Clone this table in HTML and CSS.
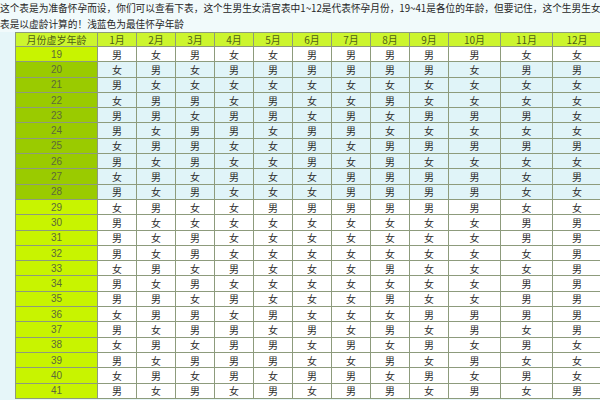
FILE: index.html
```html
<!DOCTYPE html>
<html lang="zh-CN">
<head>
<meta charset="utf-8">
<title>生男生女清宫表</title>
<link rel="stylesheet" href="styles.css">
</head>
<body>
<div class="page">
  <div class="intro">
    <p class="line">这个表是为准备怀孕而设，你们可以查看下表，这个生男生女清宫表中1~12是代表怀孕月份，19~41是各位的年龄，但要记住，这个生男生女清</p>
    <p class="line">表是以虚龄计算的！浅蓝色为最佳怀孕年龄</p>
  </div>
  <table class="chart">
    <colgroup>
      <col class="c-age"><col class="c-m"><col class="c-m"><col class="c-m"><col class="c-m"><col class="c-m"><col class="c-m"><col class="c-m"><col class="c-m"><col class="c-m"><col class="c-w"><col class="c-w"><col class="c-l">
    </colgroup>
    <thead>
      <tr class="head"><th>月份虚岁年龄</th><th>1月</th><th>2月</th><th>3月</th><th>4月</th><th>5月</th><th>6月</th><th>7月</th><th>8月</th><th>9月</th><th>10月</th><th>11月</th><th>12月</th></tr>
    </thead>
    <tbody>
      <tr class="plain"><th>19</th><td>男</td><td>女</td><td>男</td><td>女</td><td>女</td><td>男</td><td>男</td><td>男</td><td>男</td><td>男</td><td>女</td><td>女</td></tr>
      <tr class="best"><th>20</th><td>女</td><td>男</td><td>女</td><td>男</td><td>男</td><td>男</td><td>男</td><td>男</td><td>男</td><td>女</td><td>男</td><td>男</td></tr>
      <tr class="best"><th>21</th><td>男</td><td>女</td><td>女</td><td>女</td><td>女</td><td>女</td><td>女</td><td>女</td><td>女</td><td>女</td><td>女</td><td>女</td></tr>
      <tr class="best"><th>22</th><td>女</td><td>男</td><td>男</td><td>女</td><td>男</td><td>女</td><td>女</td><td>男</td><td>女</td><td>女</td><td>女</td><td>女</td></tr>
      <tr class="best"><th>23</th><td>男</td><td>男</td><td>女</td><td>男</td><td>男</td><td>女</td><td>男</td><td>女</td><td>男</td><td>男</td><td>男</td><td>女</td></tr>
      <tr class="best"><th>24</th><td>男</td><td>女</td><td>男</td><td>男</td><td>女</td><td>男</td><td>男</td><td>女</td><td>女</td><td>女</td><td>女</td><td>女</td></tr>
      <tr class="best"><th>25</th><td>女</td><td>男</td><td>男</td><td>女</td><td>女</td><td>男</td><td>女</td><td>男</td><td>男</td><td>男</td><td>男</td><td>男</td></tr>
      <tr class="best"><th>26</th><td>男</td><td>女</td><td>男</td><td>女</td><td>女</td><td>男</td><td>女</td><td>男</td><td>女</td><td>女</td><td>女</td><td>女</td></tr>
      <tr class="best"><th>27</th><td>女</td><td>男</td><td>女</td><td>男</td><td>女</td><td>女</td><td>男</td><td>男</td><td>男</td><td>男</td><td>女</td><td>男</td></tr>
      <tr class="best"><th>28</th><td>男</td><td>女</td><td>男</td><td>女</td><td>女</td><td>女</td><td>男</td><td>男</td><td>男</td><td>男</td><td>女</td><td>女</td></tr>
      <tr class="plain"><th>29</th><td>女</td><td>男</td><td>女</td><td>女</td><td>男</td><td>男</td><td>男</td><td>男</td><td>男</td><td>男</td><td>女</td><td>女</td></tr>
      <tr class="plain"><th>30</th><td>男</td><td>女</td><td>女</td><td>女</td><td>女</td><td>女</td><td>女</td><td>女</td><td>女</td><td>女</td><td>男</td><td>男</td></tr>
      <tr class="plain"><th>31</th><td>男</td><td>女</td><td>男</td><td>女</td><td>女</td><td>女</td><td>女</td><td>女</td><td>女</td><td>女</td><td>男</td><td>男</td></tr>
      <tr class="plain"><th>32</th><td>男</td><td>女</td><td>男</td><td>女</td><td>女</td><td>女</td><td>女</td><td>女</td><td>女</td><td>女</td><td>女</td><td>男</td></tr>
      <tr class="plain"><th>33</th><td>女</td><td>男</td><td>女</td><td>男</td><td>女</td><td>女</td><td>女</td><td>男</td><td>女</td><td>女</td><td>女</td><td>男</td></tr>
      <tr class="plain"><th>34</th><td>男</td><td>女</td><td>男</td><td>女</td><td>女</td><td>女</td><td>女</td><td>女</td><td>女</td><td>女</td><td>男</td><td>男</td></tr>
      <tr class="plain"><th>35</th><td>男</td><td>男</td><td>女</td><td>男</td><td>女</td><td>女</td><td>女</td><td>男</td><td>女</td><td>女</td><td>男</td><td>男</td></tr>
      <tr class="plain"><th>36</th><td>女</td><td>男</td><td>男</td><td>女</td><td>男</td><td>女</td><td>女</td><td>女</td><td>男</td><td>男</td><td>男</td><td>男</td></tr>
      <tr class="plain"><th>37</th><td>男</td><td>女</td><td>男</td><td>男</td><td>女</td><td>男</td><td>女</td><td>男</td><td>女</td><td>男</td><td>女</td><td>男</td></tr>
      <tr class="plain"><th>38</th><td>女</td><td>男</td><td>女</td><td>男</td><td>男</td><td>女</td><td>男</td><td>女</td><td>男</td><td>女</td><td>男</td><td>女</td></tr>
      <tr class="plain"><th>39</th><td>男</td><td>女</td><td>男</td><td>男</td><td>男</td><td>女</td><td>女</td><td>男</td><td>女</td><td>男</td><td>女</td><td>女</td></tr>
      <tr class="plain"><th>40</th><td>女</td><td>男</td><td>女</td><td>男</td><td>女</td><td>男</td><td>男</td><td>女</td><td>男</td><td>女</td><td>男</td><td>女</td></tr>
      <tr class="plain"><th>41</th><td>男</td><td>女</td><td>男</td><td>女</td><td>男</td><td>女</td><td>男</td><td>男</td><td>女</td><td>男</td><td>女</td><td>男</td></tr>
    </tbody>
  </table>
</div>
</body>
</html>
```

FILE: styles.css
```css
html, body {
  margin: 0;
  padding: 0;
}
body {
  width: 600px;
  height: 400px;
  overflow: hidden;
  background: #e6f6f9;
  font-family: "Noto Sans CJK SC", "Liberation Sans", sans-serif;
}
.page {
  display: flex;
  flex-direction: column;
}
.intro {
  background: #f1fafb;
  height: 32px;
}
.line {
  margin: 0;
  font-size: 9.7px;
  line-height: 16px;
  height: 16px;
  color: #262626;
  white-space: nowrap;
  overflow: hidden;
}
.chart {
  margin-left: 15px;
  border-collapse: collapse;
  table-layout: fixed;
  width: 586px;
  font-size: 10px;
}
.c-age { width: 82px; }
.c-m { width: 39px; }
.c-w { width: 52px; }
.c-l { width: 49px; }
.chart th,
.chart td {
  border: 1px solid #8d9b7c;
  padding: 0;
  text-align: center;
  font-weight: normal;
  line-height: 13px;
}
.chart tr { height: 15.3px; }
.chart tr.head { height: 14px; }
.head th {
  background: #ccf52e;
  color: #4f5f16;
}
.chart tbody th {
  font-family: "Liberation Sans", "Noto Sans CJK SC", sans-serif;
  color: #5d6a3a;
}
.plain th { background: #c8f400; }
.plain td { background: #ffffff; color: #2e2e2e; }
.best th { background: #9acb00; color: #4e5c26; }
.best td { background: #e0f4f8; color: #2e2e2e; }
```
